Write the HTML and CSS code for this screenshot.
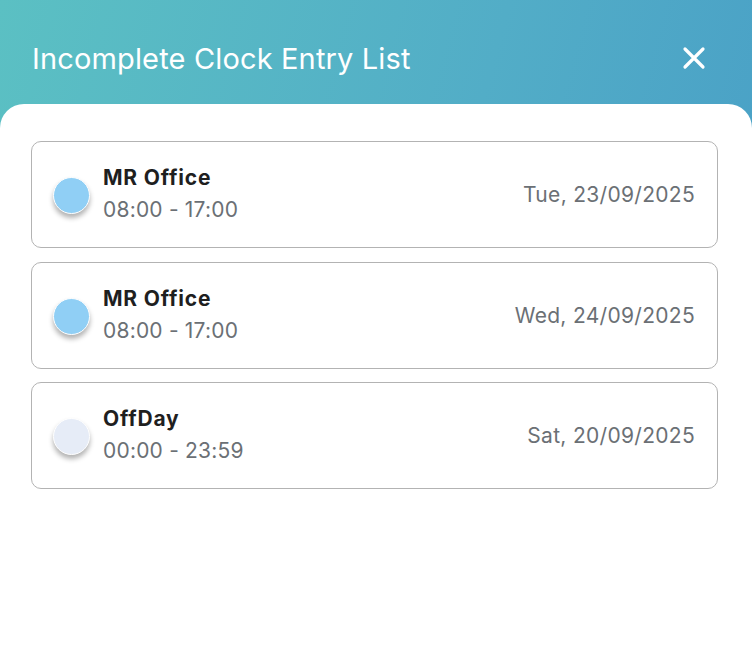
FILE: index.html
```html
<!DOCTYPE html>
<html>
<head>
<meta charset="utf-8">
<link rel="stylesheet" href="styles.css">
</head>
<body>
<div class="screen">
  <header class="header">
    <h1 class="title">Incomplete Clock Entry List</h1>
    <button class="close" aria-label="Close">
      <svg width="24" height="24" viewBox="0 0 24 24"><path d="M3 3 L21 21 M21 3 L3 21" stroke="#fff" stroke-width="3.2" stroke-linecap="round"/></svg>
    </button>
  </header>
  <main class="sheet">
    <div class="card">
      <span class="dot dot-blue"></span>
      <div class="info">
        <div class="name">MR Office</div>
        <div class="time">08:00 - 17:00</div>
      </div>
      <div class="date">Tue, 23/09/2025</div>
    </div>
    <div class="card">
      <span class="dot dot-blue"></span>
      <div class="info">
        <div class="name">MR Office</div>
        <div class="time">08:00 - 17:00</div>
      </div>
      <div class="date">Wed, 24/09/2025</div>
    </div>
    <div class="card">
      <span class="dot dot-grey"></span>
      <div class="info">
        <div class="name">OffDay</div>
        <div class="time">00:00 - 23:59</div>
      </div>
      <div class="date">Sat, 20/09/2025</div>
    </div>
  </main>
</div>
</body>
</html>
```
FILE: styles.css
```css
* { box-sizing: border-box; }
html, body { margin: 0; padding: 0; }
body {
  width: 752px;
  height: 648px;
  overflow: hidden;
  font-family: "Inter", "Noto Sans", sans-serif;
  background: #fff;
}
.screen {
  height: 648px;
  display: flex;
  flex-direction: column;
  background: linear-gradient(105deg, #5bc0c3 0%, #52adc7 55%, #479dc6 100%);
}
.header {
  height: 104px;
  flex: none;
  display: flex;
  align-items: center;
  justify-content: space-between;
  padding: 12px 46px 0 32px;
}
.title {
  margin: 0;
  font-weight: 400;
  font-size: 29px;
  color: #fff;
  letter-spacing: 0.15px;
}
.close {
  background: none;
  border: 0;
  padding: 0;
  width: 24px;
  height: 24px;
  display: flex;
}
.sheet {
  flex: 1;
  background: #fff;
  border-radius: 24px 24px 0 0;
  padding: 37px 34px 0 31px;
  display: flex;
  flex-direction: column;
  gap: 13.5px;
}
.card {
  height: 107px;
  flex: none;
  border: 1.5px solid #b3b3b3;
  border-radius: 10px;
  display: flex;
  align-items: center;
  padding: 0 22px 0 21px;
}
.dot {
  width: 37px;
  height: 37px;
  border-radius: 50%;
  flex: none;
  border: 1.5px solid #fff;
  box-shadow: 0 4px 5px rgba(0,0,0,0.3);
  margin-right: 13px;
  margin-top: 2px;
}
.dot-blue { background: #90cff5; }
.dot-grey { background: #e6ecf7; }
.info {
  flex: 1;
  display: flex;
  flex-direction: column;
  gap: 7px;
  margin-top: -2px;
}
.name {
  font-weight: 700;
  font-size: 21px;
  letter-spacing: 0.8px;
  color: #1f1f1f;
}
.time {
  font-size: 21px;
  letter-spacing: 0.2px;
  color: #6b7075;
}
.date {
  font-size: 21px;
  letter-spacing: 0.3px;
  color: #6b7075;
}
```
